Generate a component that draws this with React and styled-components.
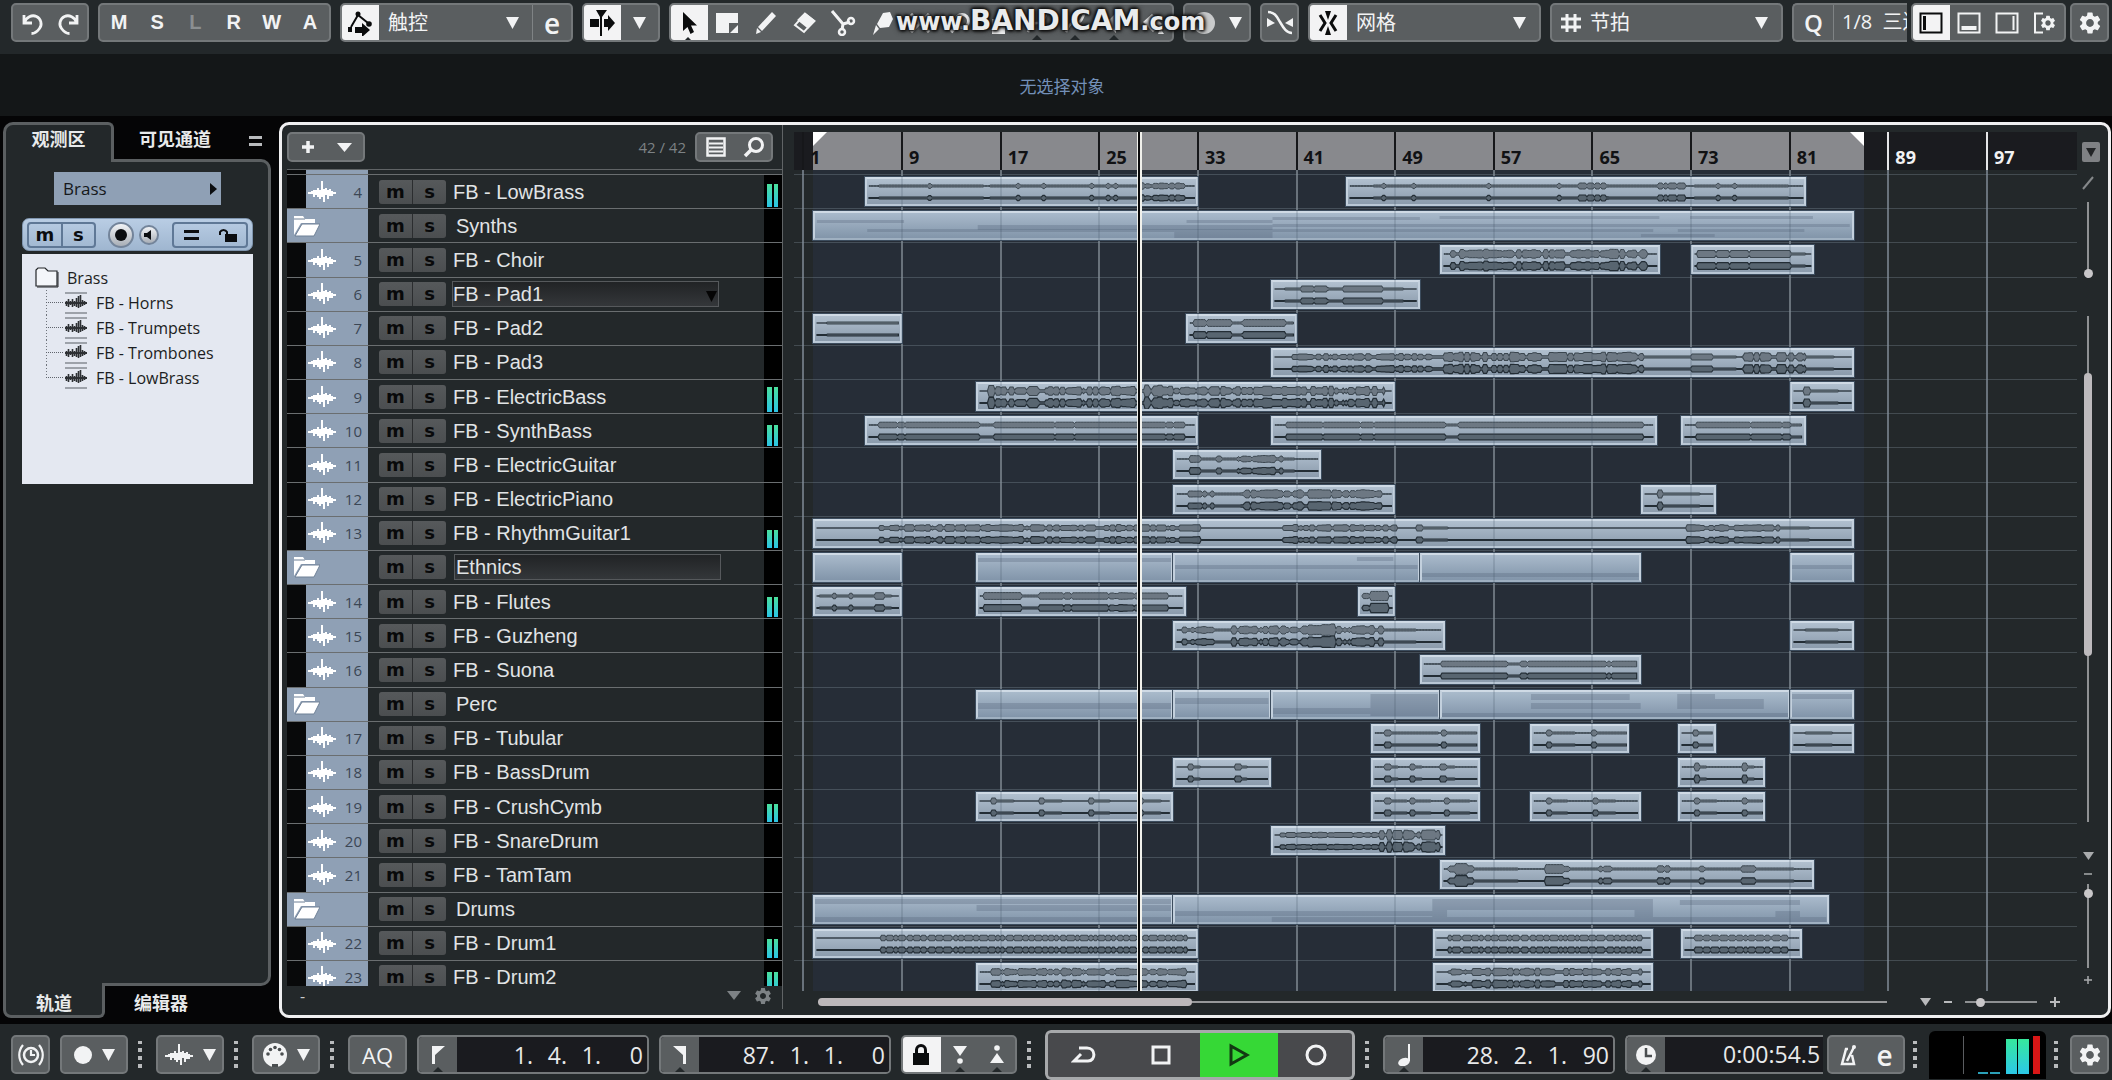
import React from 'react';
import styled, { createGlobalStyle, css } from 'styled-components';
import { MdSettings } from 'react-icons/md';

/* ---------- theme values ---------- */

const ui = '"Open Sans", "Noto Sans CJK SC", sans-serif';
const arial = '"Liberation Sans", "Noto Sans CJK SC", sans-serif';
const chrome = '#23282a';
const ink = '#f2f3f4';
const steel = '#8fa0b5';

const Global = createGlobalStyle`
  *, *::before, *::after { box-sizing: border-box; }
  body { margin: 0; background: #050506; font-family: ${ui}; color: ${ink}; }
  button, input, select { font: inherit; color: inherit; margin: 0; padding: 0; border: 0; background: none; }
  ul { list-style: none; margin: 0; padding: 0; }
  svg { display: block; flex: none; }
`;

const Page = styled.div`
  height: 100vh;
  display: flex;
  flex-direction: column;
  overflow: hidden;
  background: #050506;
`;

/* ---------- toolbar parts ---------- */

const TopBar = styled.header`
  display: flex;
  gap: 9px;
  height: 54px;
  padding: 3px 3px 12px 11px;
  background: ${chrome};
`;

const TopEnd = styled.div`
  flex: 1 1 0;
  min-width: 0;
  display: flex;
  gap: 4px;
`;

const Group = styled.div`
  display: flex;
  flex: ${(p) => (p.$grow ? '1 1 0' : 'none')};
  width: ${(p) => (p.$w ? `${p.$w}px` : 'auto')};
  min-width: 0;
  height: 39px;
  border: 2px solid #74787a;
  border-radius: 5px;
  background: ${(p) => (p.$dark ? '#1a1b1f' : '#5a5e60')};
  overflow: hidden;
  ${(p) => p.$grow && css`
    border-right: 0;
    border-radius: 5px 0 0 5px;
  `}
`;

const Cell = styled.button`
  position: relative;
  flex: ${(p) => (p.$w ? 'none' : '1 1 0')};
  width: ${(p) => (p.$w ? `${p.$w}px` : 'auto')};
  min-width: 0;
  margin: ${(p) => (p.$on ? '-2px 0 -2px -2px' : '0')};
  display: flex;
  align-items: center;
  justify-content: center;
  gap: 10px;
  font: 700 20px ${arial};
  color: ${(p) => (p.$on ? '#0b0c0d' : p.$dim ? '#8b8f91' : ink)};
  background: ${(p) => (p.$on ? '#f3f3f4' : p.$solid ? '#5a5e60' : 'transparent')};
  border-left: ${(p) => (p.$rule ? '1px solid #7f8385' : '0')};
  ${(p) => p.$notch && css`
    &::after {
      content: '';
      position: absolute;
      left: calc(50% - 6px);
      bottom: -1px;
      border: 6px solid transparent;
      border-top: 0;
      border-bottom-color: ${chrome};
    }
  `}
`;

const Thin = styled.span`
  font: ${(p) => p.$b || 400} ${(p) => p.$s || 24}px/32px ${ui};
  color: ${ink};
`;

const Picker = styled.div`
  flex: 1;
  min-width: 0;
  display: grid;
  align-items: center;
  & > * { grid-area: 1 / 1; }
  & > svg { justify-self: end; margin-right: 13px; pointer-events: none; }
`;

const PickerSelect = styled.select`
  appearance: none;
  width: 100%;
  height: 35px;
  padding: 0 9px;
  outline: 0;
  font-size: 20px;
  line-height: 34px;
`;

const HashSlot = styled.span`
  display: flex;
  align-items: center;
  padding-left: 9px;
`;

const QText = styled.span`
  padding-left: 8px;
  font-size: 20px;
  line-height: 34px;
  white-space: nowrap;
  border-left: 1px solid #7f8385;
`;

const Watermark = styled.div`
  position: absolute;
  left: 896px;
  top: 4px;
  display: flex;
  align-items: baseline;
  font: 700 24px/34px "DejaVu Sans", sans-serif;
  color: #e9ebec;
  text-shadow: 0 0 3px #111, 0 0 4px #111, 1px 1px 3px #111, -1px -1px 3px #111, 0 0 6px #222;
  pointer-events: none;
`;

const Big = styled.span`
  font-size: 28px;
`;

const InfoLine = styled.div`
  height: 62px;
  padding-left: 12px;
  display: flex;
  align-items: center;
  justify-content: center;
  background: #141718;
  color: #7390b8;
  font-size: 17px;
`;

/* ---------- main area ---------- */

const Main = styled.main`
  flex: 1;
  min-height: 0;
  display: flex;
  gap: 8px;
  padding: 6px 1px 6px 3px;
`;

const Inspector = styled.aside`
  width: 268px;
  flex: none;
  display: flex;
  flex-direction: column;
`;

const Tabs = styled.div`
  display: flex;
  height: ${(p) => (p.$low ? 32 : 37)}px;
`;

const Tab = styled.button`
  position: relative;
  width: ${(p) => p.$w}px;
  height: 100%;
  padding-bottom: ${(p) => (p.$low ? 0 : 4)}px;
  padding-top: ${(p) => (p.$low ? 2 : 0)}px;
  font-size: 18px;
  font-weight: 700;
  line-height: 24px;
  color: #e8eaeb;
  ${(p) => p.$on && css`
    z-index: 1;
    height: calc(100% + 3px);
    background: ${chrome};
    border: 3px solid #5b5f61;
    ${p.$low
      ? 'border-top: 0; border-radius: 0 0 6px 8px; margin-top: -3px; padding-top: 8px;'
      : 'border-bottom: 0; border-radius: 10px 6px 0 0; padding-bottom: 10px;'}
  `}
`;

const TabMenu = styled.button`
  margin-left: auto;
  margin-right: 9px;
  height: 37px;
`;

const InspectorBody = styled.div`
  flex: 1;
  min-height: 0;
  display: flex;
  flex-direction: column;
  padding: 10px 15px 0 16px;
  background: ${chrome};
  border: 3px solid #5b5f61;
  border-radius: 0 10px 10px 0;
`;

const TrackPick = styled.button`
  display: flex;
  align-items: center;
  justify-content: space-between;
  width: 167px;
  height: 33px;
  margin-left: 32px;
  padding: 0 4px 0 9px;
  background: ${steel};
  color: #15181b;
  font-size: 17px;
`;

const Strip = styled.div`
  display: flex;
  align-items: center;
  height: 33px;
  margin-top: 13px;
  padding: 0 4px;
  border-radius: 7px;
  border: 1px solid #7f95ae;
  background: linear-gradient(#b9cde4, #9fb6d0);
`;

const StripPair = styled.div`
  display: flex;
  height: 26px;
  width: ${(p) => p.$w}px;
  margin-left: ${(p) => p.$ml || 0}px;
  border: 2px solid #5f7896;
  border-radius: 4px;
`;

const StripKey = styled.button`
  flex: 1;
  display: flex;
  align-items: center;
  justify-content: center;
  color: #0b0d10;
  font: 700 18px/19px "DejaVu Sans", sans-serif;
  border-left: ${(p) => (p.$rule ? '2px solid #5f7896' : '0')};
`;

const Round = styled.button`
  width: ${(p) => p.$d}px;
  height: ${(p) => p.$d}px;
  margin-left: ${(p) => p.$ml}px;
  display: flex;
  align-items: center;
  justify-content: center;
  border-radius: 50%;
  border: 2px solid #73849a;
  background: linear-gradient(#f1f3f6, #a8aeb6);
`;

const Tree = styled.div`
  height: 230px;
  margin-top: 3px;
  padding: 11px 13px;
  background: #e4e8f1;
  color: #1c1e22;
  font-size: 16px;
`;

const TreeHead = styled.div`
  display: flex;
  align-items: center;
  gap: 8px;
  height: 25px;
`;

const TreeList = styled.ul`
  margin-left: 11px;
`;

const TreeItem = styled.li`
  display: flex;
  align-items: center;
  height: 25px;
  gap: 9px;
  &::before {
    content: '';
    align-self: flex-start;
    width: 17px;
    height: 13px;
    margin-right: -7px;
    border-bottom: 1px dotted #5f646c;
  }
  background: repeating-linear-gradient(#6f747c 0 1px, transparent 1px 3px) left top / 1px ${(p) => (p.$last ? '12px' : '100%')} no-repeat;
`;

const Frame = styled.section`
  flex: 1;
  min-width: 0;
  display: grid;
  grid-template-columns: 501px minmax(0, 1fr) 31px;
  grid-template-rows: 45px minmax(0, 1fr) 29px;
  background: ${chrome};
  border: 3px solid #f0f0f1;
  border-radius: 10px;
`;

const ListHead = styled.div`
  display: flex;
  align-items: center;
  margin-left: 5px;
  padding-right: 9px;
  border-right: 1px solid #606466;
  border-bottom: 1px solid #606466;
`;

const HeadGroup = styled(Group)`
  height: 30px;
`;

const Count = styled.span`
  margin-left: auto;
  margin-right: 9px;
  color: #7d8285;
  font-size: 15px;
`;

const rowsTemplate = '4px repeat(23, minmax(0, 34fr)) minmax(0, 26fr)';

const TrackList = styled.ul`
  display: grid;
  grid-template-rows: ${rowsTemplate};
  margin-left: 5px;
  border-right: 1px solid #606466;
`;

const TrackRow = styled.li`
  overflow: hidden;
  border-top: 1px solid #6a6e70;
`;

const TrackLine = styled.div`
  display: flex;
  align-items: center;
  height: 34px;
  padding-bottom: 1px;
`;

const StubRow = styled.li`
  display: flex;
`;

const Indent = styled.span`
  width: 19px;
  height: 34px;
  background: #08090a;
`;

const Tag = styled.span`
  display: flex;
  align-items: center;
  justify-content: space-between;
  width: ${(p) => (p.$folder ? 81 : 62)}px;
  height: 34px;
  padding: ${(p) => (p.$folder ? '0 6px' : '0 6px 0 2px')};
  background: ${steel};
  color: #3b4654;
  font-size: 15px;
`;

const KeyPair = styled.span`
  display: flex;
  gap: 1px;
  margin-left: 11px;
  width: 67px;
  height: 24px;
  border-radius: 3px;
  overflow: hidden;
  background: #2b2d2f;
`;

const Key = styled.button`
  flex: 1;
  background: linear-gradient(#56595b, #4b4e50);
  color: #08090a;
  font: 700 18px/20px "DejaVu Sans", sans-serif;
  height: 24px;
`;

const nameFont = css`
  font: 400 20px/24px ${arial};
  color: #e1e4e6;
`;

const Name = styled.span`
  flex: 1;
  padding-left: ${(p) => (p.$folder ? 10 : 7)}px;
  ${nameFont}
`;

const nameBox = css`
  ${nameFont}
  width: 267px;
  height: 26px;
  border: 1px solid #56595c;
  background: linear-gradient(#212325, #34373a);
  outline: 0;
`;

const NameInput = styled.input`
  && {
    ${nameBox}
    margin-left: 8px;
    margin-right: auto;
    padding-left: 1px;
  }
`;

const NamePick = styled.div`
  display: grid;
  align-items: center;
  margin: 0 auto 0 6px;
  & > * { grid-area: 1 / 1; }
  & > svg { justify-self: end; margin: 4px 2px 0 0; pointer-events: none; }
`;

const NameSelect = styled.select`
  && {
    ${nameBox}
    appearance: none;
  }
`;

const MeterSlot = styled.span`
  display: flex;
  align-items: flex-end;
  gap: 2px;
  width: 18px;
  height: 34px;
  margin-left: auto;
  padding: 0 4px 2px 3px;
  background: #000;
`;

const MeterBar = styled.span`
  width: 5px;
  height: ${(p) => p.$h}px;
  background: linear-gradient(#4adf9c, #2bc4e6);
`;

const ListFoot = styled.div`
  display: flex;
  align-items: center;
  gap: 12px;
  margin: 0 0 6px 5px;
  padding: 0 9px 4px 13px;
  border-right: 1px solid #606466;
  color: #7d8285;
`;

const Dash = styled.span`
  margin-right: auto;
  color: #c8cacb;
  font-size: 16px;
`;

/* ---------- timeline ---------- */

const BARS = 104.06;
const at = (bar) => ((bar - 0.24) / BARS) * 100;
const barPx = 12.33;

const Ruler = styled.div`
  position: relative;
  margin: 7px 0 0 11px;
  background: #1a1b1f;
  overflow: hidden;
`;

const Cycle = styled.div`
  position: absolute;
  top: 0;
  bottom: 0;
  left: ${at(1.75)}%;
  right: ${100 - at(87)}%;
  display: flex;
  justify-content: space-between;
  background: #88898d;
`;

const CycleBand = styled.div`
  position: absolute;
  top: 0;
  bottom: 0;
  left: ${at(1.75)}%;
  right: ${100 - at(87)}%;
  background: #262d37;
`;

const Tick = styled.span`
  position: absolute;
  top: 0;
  bottom: 0;
  left: calc(${(p) => at(p.$bar)}% - 1px);
  padding: 14px 0 0 6px;
  border-left: 2px solid ${(p) => (p.$out ? '#e6e6e8' : '#16171a')};
  color: ${(p) => (p.$out ? '#f2f2f3' : '#111214')};
  font-size: 18px;
  font-weight: 700;
  line-height: 22px;
`;

const Lanes = styled.div`
  position: relative;
  margin-left: 11px;
  margin-bottom: -5px;
  padding-bottom: 5px;
  overflow: hidden;
`;

const LaneGrid = styled.ul`
  position: relative;
  height: 100%;
  display: grid;
  grid-template-rows: ${rowsTemplate};
`;

const Lane = styled.li`
  position: relative;
  border-top: 1px solid rgba(150, 170, 180, 0.28);
`;

const GridLine = styled.span`
  position: absolute;
  top: 0;
  bottom: 0;
  left: calc(${(p) => at(p.$bar)}% - 1px);
  width: 2px;
  background: ${(p) => (p.$over ? 'rgba(60, 78, 96, 0.18)' : '#737a82')};
`;

const ClipBox = styled.div`
  position: absolute;
  top: 2px;
  left: ${(p) => at(p.$a)}%;
  width: ${(p) => ((p.$b - p.$a) / BARS) * 100}%;
  height: 29px;
  overflow: hidden;
  border: 2px solid #c3d0dd;
  border-top-color: #cfdae5;
  border-bottom-color: ${(p) => (p.$folder ? '#9fb0c1' : '#b9c7d5')};
  outline: 1px solid #3c4c5d;
  background: ${(p) => (p.$folder ? 'linear-gradient(#a9bacb, #8295aa)' : 'linear-gradient(#b1c0cf, #8b9bac)')};
  & > svg { width: 100%; height: 25px; }
`;

const Playhead = styled.div`
  position: absolute;
  z-index: 3;
  top: 0;
  bottom: 0;
  left: ${at(28.05)}%;
  width: 5px;
  background: #0a0a0b;
  border: 0 solid #f1f1ec;
  border-width: 0 2px 0 1px;
`;

const Side = styled.div`
  display: flex;
  flex-direction: column;
  align-items: center;
  padding-right: 9px;
  color: #a9abad;
`;

const SideButton = styled.button`
  width: 18px;
  height: 20px;
  margin: 17px 0 0 6px;
  display: flex;
  align-items: center;
  justify-content: center;
  border-radius: 2px;
  background: #7f8184;
`;

const rangeBase = css`
  appearance: none;
  -webkit-appearance: none;
  outline: 0;
  &::-webkit-slider-thumb {
    -webkit-appearance: none;
    width: 9px;
    height: 9px;
    border-radius: 50%;
    background: #c9c7c9;
  }
`;

const VRange = styled.input`
  && {
    ${rangeBase}
    writing-mode: vertical-lr;
    direction: ${(p) => (p.$up ? 'rtl' : 'ltr')};
    width: 10px;
    height: ${(p) => p.$h}px;
    margin-top: ${(p) => (p.$up ? 12 : 0)}px;
    background: linear-gradient(#8f9193, #8f9193) center / 2px 100% no-repeat;
  }
`;

const HRange = styled.input`
  && {
    ${rangeBase}
    width: 72px;
    height: 10px;
    background: linear-gradient(#8f9193, #8f9193) center / 100% 2px no-repeat;
  }
`;

const PencilMark = styled.svg`
  margin-top: 6px;
`;

const VScroll = styled.div`
  flex: 1;
  width: 8px;
  margin: 38px 0 30px;
  padding-top: 57px;
  background: linear-gradient(#8f9193, #8f9193) center / 2px 100% no-repeat;
`;

const VThumb = styled.div`
  height: 63%;
  border-radius: 4px;
  background: #bdbabd;
`;

const TimeFoot = styled.div`
  grid-column: 2 / 4;
  display: flex;
  align-items: center;
  padding: 3px 48px 0 35px;
  gap: 13px;
  color: #b9babc;
`;

const HScroll = styled.div`
  flex: 1;
  margin-right: 20px;
  background: linear-gradient(#98999b, #98999b) center / 100% 2px no-repeat;
`;

const HThumb = styled.div`
  width: 35%;
  height: 8px;
  border-radius: 4px;
  background: #bdb8ba;
`;

/* ---------- transport ---------- */

const BottomBar = styled.footer`
  display: flex;
  align-items: center;
  gap: 10px;
  height: 56px;
  padding: 5px 3px 0 11px;
  background: ${chrome};
`;

const EndGroup = styled.div`
  flex: 1 1 0;
  min-width: 0;
  display: flex;
  align-items: center;
  gap: 8px;
`;

const TimeClip = styled.div`
  flex: 1;
  min-width: 0;
  display: flex;
  margin-right: -4px;
`;

const Dots = styled.span`
  width: 8px;
  height: 27px;
  flex: none;
  background: repeating-linear-gradient(#b9bbbd 0 4px, transparent 4px 8px) left / 4px 28px no-repeat;
`;

const Digits = styled.span`
  flex: 1;
  display: grid;
  grid-template-columns: 1fr 34px 34px 42px;
  align-items: center;
  justify-items: end;
  padding-right: 4px;
  font-size: 23px;
  line-height: 34px;
  color: #e8e9ea;
  background: #1a1b1f;
`;

const Clock = styled.span`
  flex: 1;
  padding-left: 58px;
  overflow: hidden;
  white-space: nowrap;
  font-size: 23px;
  line-height: 34px;
  color: #e8e9ea;
  background: #1a1b1f;
`;

const Transport = styled.div`
  position: relative;
  display: flex;
  flex: none;
  width: 310px;
  height: 50px;
  border-radius: 6px;
  background: #48494c;
  overflow: hidden;
  &::after {
    content: '';
    position: absolute;
    inset: 0;
    border: 3px solid #a7a9ab;
    border-radius: 6px;
    pointer-events: none;
  }
`;

const TransportKey = styled.button`
  flex: 1;
  display: flex;
  align-items: center;
  justify-content: center;
  background: ${(p) => (p.$play ? '#36d836' : 'transparent')};
`;

const Output = styled.div`
  display: flex;
  align-items: flex-end;
  flex: none;
  width: 117px;
  height: 48px;
  padding: 5px 4px 5px 34px;
  border-radius: 6px 6px 0 0;
  background: #000;
`;

const OutBar = styled.span`
  width: ${(p) => p.$w}px;
  height: ${(p) => p.$h}px;
  margin-left: ${(p) => p.$ml}px;
  background: ${(p) => p.$c};
`;

const cyanBar = 'linear-gradient(#36e89c, #2cc8e8)';

/* ---------- icons ---------- */

const Icon = ({ w = 26, h = 26, children, ...rest }) => (
  <svg width={w} height={h} viewBox={`0 0 ${w} ${h}`} fill="none" stroke="currentColor" strokeWidth="2.5" aria-hidden="true" {...rest}>
    {children}
  </svg>
);
const Solid = (p) => <Icon {...p} fill="currentColor" stroke="none" />;

const Down = ({ w = 13, h = 12, color = ink }) => (
  <svg width={w} height={h} viewBox="0 0 12 12" preserveAspectRatio="none" aria-hidden="true">
    <path d="M0 0h12L6 12z" fill={color} />
  </svg>
);

const Undo = () => <Icon w={24} h={24}><path d="M4 4v8h8M4.500 11.500C6 6 12 3.500 16.500 5.500s6 8 3 12-5 5-8 5" strokeWidth="2.800" /></Icon>;
const Redo = () => <Icon w={24} h={24}><path d="M20 4v8h-8M19.500 11.500C18 6 12 3.500 7.500 5.500s-6 8-3 12 5 5 8 5" strokeWidth="2.800" /></Icon>;
const Automation = () => (
  <Icon><path d="M4 17 11 5l10 8" strokeWidth="2" /><g fill="currentColor" stroke="none"><circle cx="11" cy="4" r="2.500" /><circle cx="22" cy="14" r="2.800" /><rect x="1" y="17" width="4" height="5" /><path d="M8 17h7v-4l8 7-8 7v-4H8z" /></g></Icon>
);
const Scroll = () => <Solid><path d="M1 9h9v8H1zM15 9h4V5l7 8-7 8v-4h-4zM7 0h11l-5 7v19h-2V7z" /></Solid>;
const Arrow = () => <Solid><path d="M8 2v19l4.500-4 3 7 3.500-2-3-6.500h6z" /></Solid>;
const Range = () => <Solid><path d="M2 3h22v10h-9v10H2zM24 15v8h-8z" /></Solid>;
const Pencil = () => <Solid><path d="M19 2l4 4L9 21l-4-4zM4 18l4 4-5 2z" /></Solid>;
const Eraser = () => <Icon><path d="M14 4 23 11 13 22 4 15z" strokeWidth="2" /><path d="M14 4 23 11 17 17 8 10z" fill="currentColor" /></Icon>;
const Scissors = () => <Icon><path d="M2 1 13 14l7-2M13 14l-1 6" strokeWidth="3" /><circle cx="21" cy="11" r="3" /><circle cx="12" cy="22" r="3" /></Icon>;
const Glue = () => <Solid><path d="M14 3l7-1 3 7-4 8-9 1-3-4zM7 15l3 4-6 6z" /></Solid>;
const Cross = () => <Icon><path d="M4 4l18 18M22 4 4 22" strokeWidth="3" /></Icon>;
const Lens = () => <Icon><circle cx="16" cy="11" r="6.500" strokeWidth="3" /><path d="M11 16 5 22" strokeWidth="3.500" /></Icon>;
const Hand = () => <Solid><path d="M7 24V9h3v6h2V3h3v12h2V6h3v18z" /></Solid>;
const LineIcon = () => <Icon><path d="M4 22C10 4 16 22 22 4" /></Icon>;
const Speaker = () => <Solid><path d="M4 9h5l6-6v20l-6-6H4z" /></Solid>;
const Bucket = () => <Solid><path d="M3 12 12 4l10 10-9 8zM20 18l4 6h-6z" /></Solid>;
const Ball = () => <Solid><circle cx="11" cy="13" r="11" fill="#c9cbcc" /></Solid>;
const XFade = () => <Icon><path d="M1 2c7 0 9 5 12 10s6 11 12 11" /><path d="M0 8l8 5-8 4zM26 8l-8 5 8 4z" fill="currentColor" stroke="none" /></Icon>;
const Snap = () => <Icon><path d="M5 5l5 8-5 8M21 5l-5 8 5 8" strokeWidth="3" /><path d="M10 1h6l-3 9zM10 25h6l-3-9z" fill="currentColor" stroke="none" /></Icon>;
const Hash = () => <Icon w={20} h={22}><path d="M6 2v18M14 2v18M0 7h20M0 15h20" strokeWidth="3" /></Icon>;
const Zone = ({ side }) => (
  <Icon w={24} h={22}>
    <rect x="1.500" y="1.500" width="21" height="19" strokeWidth="2" />
    {side === 'left' && <path d="M5.500 4v14" strokeWidth="3" />}
    {side === 'low' && <path d="M4.500 16h15" strokeWidth="4" />}
    {side === 'right' && <path d="M18.500 4v14" strokeWidth="2" />}
  </Icon>
);
const ZoneSetup = () => <Icon w={24} h={22}><path d="M10 1.500H2v19h8" strokeWidth="2" /><g transform="translate(6 2)"><MdSettings size={18} stroke="none" fill="currentColor" /></g></Icon>;
const Equals = ({ color = '#b9bbbd', w = 13 }) => <svg width={w} height="12" viewBox="0 0 13 12" preserveAspectRatio="none"><path d="M0 1h13v3H0zM0 8h13v3H0z" fill={color} /></svg>;
const Unlock = () => <svg width="20" height="16" viewBox="0 0 20 16"><path d="M2 8V5a4 4 0 0 1 7 0v3" fill="none" stroke="#0b0d10" strokeWidth="2" /><path d="M7 7h12v8H7z" fill="#0b0d10" /></svg>;
const Plus = () => <Icon w={14} h={14}><path d="M7 1v12M1 7h12" strokeWidth="3.500" /></Icon>;
const ListIcon = () => <Icon w={20} h={20}><rect x="1.500" y="1.500" width="17" height="17" /><path d="M3 6.500h14M3 10.500h14M3 14.500h14" strokeWidth="2" /></Icon>;
const FolderOpen = () => (
  <svg width="27" height="22" viewBox="0 0 27 22" aria-hidden="true">
    <path d="M1 1h9l2 3h10v4H8L1 20z" fill="#fff" />
    <path d="M9 9h18l-6 12H2z" fill="#fff" stroke="#6f8096" strokeWidth="1" />
    <path d="M1 4h11" stroke="#6f8096" />
  </svg>
);
const waveBars = [[2, 1, 1], [4, 2, 1], [6, 3, 4], [8, 3, 2], [10, 5, 4], [12, 3, 6], [14, 12, 4], [16, 4, 9], [18, 5, 2], [20, 3, 6], [22, 4, 3], [24, 2, 3], [26, 1, 1]];
const Wave = ({ color = '#fff' }) => (
  <svg width="28" height="24" viewBox="0 0 28 24" aria-hidden="true">
    <path d={`M0 13h28${waveBars.map(([x, u, d]) => `M${x} ${13 - u}V${13 + d}`).join('')}`} stroke={color} strokeWidth="2" fill="none" />
  </svg>
);
const AudioGlyph = () => (
  <svg width="22" height="22" viewBox="0 0 22 22" aria-hidden="true">
    <path d="M0 1h22M0 21h22" stroke="#858a92" strokeWidth="1.500" />
    <path d="M0 11h22" stroke="#2d3034" strokeWidth="2" />
    <path d="M1.500 9v5M3.500 7v8M5.500 9v4M7.500 7v8M9.500 9v5M11.500 6v9M13.500 4v12M15.500 3v12M17.500 8v6M19.500 9v4" stroke="#2d3034" strokeWidth="1.600" />
  </svg>
);
const TreeFolder = () => <svg width="24" height="21" viewBox="0 0 24 21"><path d="M1 19V3l2-2h7l3 3h9v15z" fill="#f4f6fa" stroke="#222529" strokeWidth="1.200" /><path d="M2 20h21V5" fill="none" stroke="#222529" /></svg>;
const Sync = () => <Icon w={28} h={26}><circle cx="14" cy="13" r="7" /><path d="M14 8v5h4M6 3c-5 6-5 14 0 20M22 3c5 6 5 14 0 20" strokeWidth="2.200" /></Icon>;
const Midi = () => <Solid w={24} h={24}><circle cx="12" cy="12" r="12" /><g fill="#4a4e50"><circle cx="5" cy="11" r="1.800" /><circle cx="7.500" cy="6.500" r="1.800" /><circle cx="12" cy="4.500" r="1.800" /><circle cx="16.500" cy="6.500" r="1.800" /><circle cx="19" cy="11" r="1.800" /><path d="M9 24v-3h6v3z" /></g></Solid>;
const LeftFlag = () => <Solid w={14} h={18}><path d="M1 0h13L4 9v9H1z" /></Solid>;
const RightFlag = () => <Solid w={14} h={18}><path d="M13 0H0l10 9v9h3z" /></Solid>;
const Lock = () => <Icon w={18} h={22}><path d="M4.500 10V6a4.500 4.500 0 0 1 9 0v4" strokeWidth="3" /><rect x="1" y="9" width="16" height="12" fill="currentColor" stroke="none" /></Icon>;
const PunchIn = () => <Solid w={16} h={20}><path d="M1 1h14L8 11z" /><circle cx="8" cy="16" r="2.800" /></Solid>;
const PunchOut = () => <Solid w={16} h={20}><path d="M1 18h14L8 8z" /><circle cx="8" cy="3" r="2.800" /></Solid>;
const Cycling = () => <Icon><path d="M8 6h8c9 0 9 13 1 13H3l7-7" strokeWidth="3" /></Icon>;
const Note = () => <Solid w={16} h={22}><path d="M12 0h2v17h-2z" /><ellipse cx="8" cy="18" rx="6" ry="4" transform="rotate(-20 8 18)" /></Solid>;
const ClockIcon = () => <Icon w={22} h={22}><circle cx="11" cy="11" r="10" fill="currentColor" stroke="none" /><path d="M11 4v8h6" stroke="#4a4e50" /></Icon>;
const Metronome = () => <Icon w={18} h={22}><path d="M9 5 7 5 3 20h12l-2-9M8 17l7-14" /><circle cx="15" cy="3" r="2" fill="currentColor" stroke="none" /></Icon>;

/* ---------- wave forms ---------- */

function makeRandom(seed) {
  let s = (seed * 2654435761) >>> 0;
  return () => {
    s = (s + 0x6d2b79f5) >>> 0;
    let t = Math.imul(s ^ (s >>> 15), 1 | s);
    t = (t + Math.imul(t ^ (t >>> 7), 61 | t)) ^ t;
    return ((t ^ (t >>> 14)) >>> 0) / 4294967296;
  };
}

/* Segment kinds: f flat, s sustained with notches, n noise, p sparse pulses, o row of blobs, h single hit. */
function envelope(width, segs, seed) {
  const rnd = makeRandom(seed);
  const pts = [];
  let hold = 0;
  let value = 0.5;
  for (let x = 0; x <= width; x += 1.5) {
    const f = x / width;
    const seg = segs.find((g) => f >= g[0] && f <= g[1]);
    if (!seg) {
      value = 0.3;
      hold = 0;
    } else {
      const [a, , amp, kind] = seg;
      const r = rnd();
      if (kind === 'f') value = 1;
      else if (kind === 'h') value = x - a * width < 5 ? amp : 1;
      else if (hold > 0) hold -= 1;
      else if (kind === 's') { value = r < 0.1 ? 1.5 : amp; hold = r < 0.1 ? 0 : 3; }
      else if (kind === 'p') { value = r < 0.1 ? amp : 1; hold = r < 0.1 ? 1 : 2; }
      else if (kind === 'n') { value = r < 0.35 ? 1.2 : 1.4 + r * (amp - 1.6); hold = r > 0.5 ? 2 : 0; }
      else if (kind === 'o') { value = value > 2 ? 1.1 : amp; hold = value > 2 ? 1 + Math.floor(r * 4) : (r > 0.8 ? 1 : 0); }
    }
    pts.push([x, value]);
  }
  return pts;
}

function outline(pts, mid) {
  const top = pts.map(([x, v]) => `${x.toFixed(1)} ${(mid - v).toFixed(1)}`);
  const low = pts.slice().reverse().map(([x, v]) => `${x.toFixed(1)} ${(mid + v).toFixed(1)}`);
  return `M${top.join('L')}L${low.join('L')}Z`;
}

function WaveClip({ a, b, segs, seed }) {
  const w = Math.round((b - a) * barPx);
  const one = envelope(w - 7, segs, seed);
  return (
    <ClipBox $a={a} $b={b}>
      <svg viewBox={`-2 0 ${w - 4} 25`} preserveAspectRatio="none" aria-hidden="true">
        <path d={outline(one, 7)} fill="#6d7883" stroke="#3b464f" strokeWidth="1" />
        <path d={outline(one, 19)} fill="#586570" stroke="#232d35" strokeWidth="1.200" />
      </svg>
    </ClipBox>
  );
}

function FolderClip({ a, b, parts }) {
  const w = (b - a) * barPx;
  return (
    <ClipBox $a={a} $b={b} $folder>
      <svg viewBox={`0 0 ${w} 25`} preserveAspectRatio="none" aria-hidden="true">
        {parts.map(([x1, x2, y, h], i) => (
          <rect key={i} x={(x1 - a) * barPx} y={y - 2} width={(x2 - x1) * barPx} height={h} fill="rgba(86,104,124,0.32)" />
        ))}
      </svg>
    </ClipBox>
  );
}

/* ---------- project data ---------- */

const END = 86.2;
const hits = (list, amp = 3) => list.map(([a, b]) => [a, b, amp, 'h']);
const drum = [[0.05, 0.96, 2.8, 'o']];

const tracks = [
  { n: 4, name: 'FB - LowBrass', meter: 23, clips: [
    [6, 33, [[0.03, 0.35, 2.4, 'p'], [0.37, 0.82, 2.6, 'p'], [0.82, 0.97, 3.4, 'n']]],
    [45, 82.3, [[0.05, 0.5, 2.6, 'p'], [0.5, 0.57, 3, 'o'], [0.57, 0.68, 1, 'f'], [0.68, 0.74, 3, 'o'], [0.76, 0.97, 2.6, 'p']]] ] },
  { name: 'Synths', folder: [[1.75, END, [[1.9, 9, 9, 3], [6, 15, 18, 3], [15, 39, 14, 5], [15, 31, 18, 3], [31, 39, 18, 9], [32, 39, 9, 3], [39, 51, 6, 3], [52.6, 70.5, 5, 3], [73, 83, 5, 3], [39, 86, 13, 3], [39, 70, 18, 3], [72, 82.3, 18, 3], [69, 75, 23, 3]]]] },
  { n: 5, name: 'FB - Choir', clips: [
    [52.6, 70.5, [[0.03, 0.95, 5, 'n']]],
    [73, 83, [[0.02, 0.82, 3.4, 's'], [0.82, 0.95, 1, 'f']]] ] },
  { n: 6, name: 'FB - Pad1', pick: true, clips: [
    [38.9, 51, [[0.07, 0.19, 1, 'f'], [0.19, 0.38, 3, 's'], [0.38, 0.48, 1, 'f'], [0.48, 0.75, 3, 's'], [0.75, 0.9, 1, 'f']]] ] },
  { n: 7, name: 'FB - Pad2', clips: [
    [1.75, 9, [[0.12, 1, 1, 'f']]],
    [32, 41, [[0.03, 0.4, 3.4, 's'], [0.4, 0.5, 1, 'f'], [0.5, 0.92, 3.4, 's'], [0.92, 1, 1, 'f']]] ] },
  { n: 8, name: 'FB - Pad3', clips: [
    [38.9, END, [[0.03, 0.28, 3.6, 'n'], [0.28, 0.64, 5, 'n'], [0.64, 0.72, 1, 'f'], [0.72, 0.76, 3, 's'], [0.76, 0.8, 1, 'f'], [0.81, 0.87, 5.6, 'n'], [0.87, 0.92, 4.6, 'n'], [0.92, 0.97, 1, 'f']]] ] },
  { n: 9, name: 'FB - ElectricBass', meter: 25, clips: [
    [15, 49, [[0.02, 0.04, 5.5, 's'], [0.04, 0.4, 5, 'n'], [0.4, 0.46, 6.4, 'n'], [0.46, 0.52, 4, 'n'], [0.52, 0.98, 5, 'n']]],
    [81, END, [[0.18, 0.78, 4, 'h']]] ] },
  { n: 10, name: 'FB - SynthBass', meter: 21, clips: [
    [6, 33, [[0.03, 0.34, 2.8, 's'], [0.34, 0.37, 1, 'f'], [0.37, 0.97, 2.8, 's']]],
    [38.9, 70.2, [[0.03, 0.45, 2.8, 's'], [0.45, 0.48, 1, 'f'], [0.48, 0.97, 2.8, 's']]],
    [72.2, 82.3, [[0.09, 0.9, 2.8, 's'], [0.9, 1, 1, 'f']]] ] },
  { n: 11, name: 'FB - ElectricGuitar', clips: [
    [31, 43, [[0.09, 0.16, 4, 'n'], [0.16, 0.26, 1, 'f'], [0.26, 0.31, 3, 's'], [0.31, 0.42, 1, 'f'], [0.42, 0.75, 4, 'n'], [0.75, 0.84, 1, 'f']]] ] },
  { n: 12, name: 'FB - ElectricPiano', clips: [
    [31, 49, [[0.05, 0.12, 4, 'n'], [0.12, 0.28, 3, 'p'], [0.28, 0.95, 4.6, 'n']]],
    [68.9, 75, [[0.18, 0.8, 4, 'h']]] ] },
  { n: 13, name: 'FB - RhythmGuitar1', meter: 18, clips: [
    [1.75, END, [[0.06, 0.37, 3.6, 'n'], [0.45, 0.56, 3.6, 'n'], [0.58, 0.61, 3, 'h'], [0.84, 0.93, 3.6, 'n'], [0.93, 0.96, 1, 'f']]] ] },
  { name: 'Ethnics', input: true, folder: [
    [1.75, 9, []], [15, 31, [[15, 31, 5, 4]]], [31, 51, [[31, 51, 12, 4], [46, 49, 4, 4]]], [51, 68.9, [[51, 68.9, 20, 4]]], [81, END, [[81, END, 12, 4]]]] },
  { n: 14, name: 'FB - Flutes', meter: 20, clips: [
    [1.75, 9, [[0.03, 0.68, 2.8, 'p'], [0.68, 0.82, 3.2, 's'], [0.82, 0.9, 1, 'f']]],
    [15, 32, [[0.02, 0.2, 3.4, 's'], [0.2, 0.27, 1, 'f'], [0.27, 0.62, 3.2, 's'], [0.62, 0.72, 3.6, 'n'], [0.72, 0.93, 3, 's']]],
    [46, 49, [[0.05, 0.14, 2.6, 's'], [0.14, 0.75, 4.6, 's'], [0.75, 0.88, 2.6, 's']]] ] },
  { n: 15, name: 'FB - Guzheng', clips: [
    [31, 53.05, [[0.02, 0.14, 4, 'n'], [0.14, 0.2, 1, 'f'], [0.2, 0.49, 4.4, 'n'], [0.49, 0.59, 6.4, 'n'], [0.59, 0.78, 4.6, 'n'], [0.78, 0.9, 1, 'f']]],
    [81, END, [[0.2, 0.78, 1, 'f']]] ] },
  { n: 16, name: 'FB - Suona', clips: [
    [51, 68.9, [[0.08, 0.37, 2.8, 's'], [0.37, 0.45, 2, 'p'], [0.45, 0.83, 2.8, 's'], [0.83, 0.9, 2.8, 'o'], [0.9, 1, 2.8, 's']]] ] },
  { name: 'Perc', folder: [
    [15, 31, [[15, 31, 13, 6]]], [31, 38.9, [[31, 38.9, 8, 6]]], [38.9, 52.6, [[38.9, 47, 18, 6], [47, 52.6, 4, 22]]],
    [52.6, 81, [[52.6, 81, 23, 5], [59.9, 68, 4, 6], [59.9, 68.9, 13, 6], [71.9, 75, 4, 5], [71.9, 79, 9, 10]]], [81, END, [[81, END, 4, 5]]]] },
  { n: 17, name: 'FB - Tubular', clips: [
    [47, 55.9, hits([[0.1, 0.62], [0.65, 1]])], [59.9, 68, hits([[0.13, 0.45], [0.62, 1]])],
    [71.9, 75, hits([[0.35, 1]])], [81, END, [[0.2, 0.68, 1, 'f']]] ] },
  { n: 18, name: 'FB - BassDrum', clips: [
    [31, 38.9, hits([[0.12, 0.25], [0.65, 0.78]])], [47, 55.9, hits([[0.1, 0.22], [0.34, 0.46], [0.64, 0.78]])],
    [71.9, 79, hits([[0.15, 0.3], [0.75, 0.9]], 4)] ] },
  { n: 19, name: 'FB - CrushCymb', meter: 18, clips: [
    [15, 31, hits([[0.06, 0.18], [0.31, 0.43], [0.57, 0.68], [0.83, 0.95]])], [47, 55.9, hits([[0.1, 0.32], [0.34, 0.55], [0.67, 0.92]])],
    [59.9, 68.9, hits([[0.12, 0.33], [0.57, 0.78]])], [71.9, 79, hits([[0.16, 0.44], [0.75, 1]])] ] },
  { n: 20, name: 'FB - SnareDrum', clips: [
    [38.9, 53.05, [[0.03, 0.62, 3, 'n'], [0.62, 0.98, 5.4, 'n']]] ] },
  { n: 21, name: 'FB - TamTam', clips: [
    [52.6, 83, [[0.01, 0.02, 3, 's'], [0.02, 0.05, 5.4, 's'], [0.05, 0.08, 3.2, 's'], [0.08, 0.2, 1, 'f'], [0.275, 0.31, 4.4, 's'], [0.31, 0.34, 2.6, 's'], [0.34, 0.42, 1, 'f'], [0.42, 0.46, 2.8, 'o'], [0.46, 0.58, 1, 'f'], [0.58, 0.615, 3.2, 's'], [0.615, 0.69, 1, 'f'], [0.69, 0.71, 2.8, 'o'], [0.71, 0.81, 1, 'f'], [0.81, 0.845, 3.2, 's'], [0.845, 0.95, 1, 'f']]] ] },
  { name: 'Drums', folder: [
    [1.75, 31, [[1.75, 31, 4, 5], [15, 31, 10, 6], [1.75, 31, 22, 6]]],
    [31, 84.15, [[31, 52, 16, 5], [38.9, 84.15, 22, 6], [52, 70, 4, 11], [52, 53.2, 15, 7], [68.5, 70, 15, 7], [72.2, 82, 5, 5], [80, 82, 16, 6]]]] },
  { n: 22, name: 'FB - Drum1', meter: 19, clips: [
    [1.75, 33, [[0.17, 0.98, 2.8, 'o']]], [52.05, 69.9, drum], [72.2, 82, [[0.08, 0.9, 2.8, 'o']]] ] },
  { n: 23, name: 'FB - Drum2', meter: 20, clips: [
    [15, 33, [[0.05, 0.96, 4, 'n']]], [52.05, 69.9, [[0.05, 0.96, 4, 'n']]] ] },
];

const ticks = [1, 9, 17, 25, 33, 41, 49, 57, 65, 73, 81, 89, 97];

/* ---------- sections ---------- */

function Picked({ label, value }) {
  return (
    <Picker>
      <PickerSelect aria-label={label} defaultValue={value}><option>{value}</option></PickerSelect>
      <Down />
    </Picker>
  );
}

const tools = [
  ['选择', Arrow, true], ['范围', Range], ['画笔', Pencil], ['擦除', Eraser], ['剪切', Scissors], ['胶水', Glue],
  ['静音', Cross], ['缩放', Lens], ['手', Hand], ['线', LineIcon, true], ['扭曲', LineIcon, true], ['播放', Speaker, true], ['颜色', Bucket],
];

function Toolbar() {
  return (
    <TopBar>
      <Group $w={78}><Cell aria-label="撤销"><Undo /></Cell><Cell aria-label="重做"><Redo /></Cell></Group>
      <Group $w={233}>{['M', 'S', 'L', 'R', 'W', 'A'].map((c) => <Cell key={c} $dim={c === 'L'}>{c}</Cell>)}</Group>
      <Group $w={233}>
        <Cell $w={39} $on aria-label="自动化"><Automation /></Cell>
        <Picked label="自动化模式" value="触控" />
        <Cell $w={39} $rule aria-label="编辑"><Thin $s={28} $b={600}>e</Thin></Cell>
      </Group>
      <Group $w={78}><Cell $w={39} $on aria-label="自动滚动"><Scroll /></Cell><Cell aria-label="滚动选项"><Down /></Cell></Group>
      <Group $w={505}>
        {tools.map(([label, Glyph, notch], i) => <Cell key={label} $on={i === 0} $notch={notch} aria-label={label}><Glyph /></Cell>)}
      </Group>
      <Group $w={68}><Cell aria-label="颜色菜单"><Ball /><Down /></Cell></Group>
      <Group $w={39}><Cell aria-label="零交叉"><XFade /></Cell></Group>
      <Group $w={233}><Cell $w={39} $on aria-label="吸附"><Snap /></Cell><Picked label="吸附类型" value="网格" /></Group>
      <Group $w={233}><HashSlot><Hash /></HashSlot><Picked label="网格类型" value="节拍" /></Group>
      <TopEnd>
        <Group $grow><Cell $w={39} aria-label="量化"><Thin $b={600}>Q</Thin></Cell><QText>1/8&nbsp; 三连音</QText></Group>
        <Group $w={155}>
          <Cell $w={39} $on aria-label="左区域"><Zone side="left" /></Cell>
          <Cell aria-label="下区域"><Zone side="low" /></Cell>
          <Cell aria-label="右区域"><Zone side="right" /></Cell>
          <Cell aria-label="区域设置"><ZoneSetup /></Cell>
        </Group>
        <Group $w={39}><Cell aria-label="设置"><MdSettings size={26} /></Cell></Group>
      </TopEnd>
      <Watermark><span>www.</span><Big>BANDICAM</Big><span>.com</span></Watermark>
    </TopBar>
  );
}

function LeftZone() {
  return (
    <Inspector>
      <Tabs><Tab $w={111} $on>观测区</Tab><Tab $w={122}>可见通道</Tab><TabMenu aria-label="菜单"><Equals /></TabMenu></Tabs>
      <InspectorBody>
        <TrackPick>Brass<svg width="7" height="12" viewBox="0 0 7 12"><path d="M0 0l7 6-7 6z" fill="#0b0d10" /></svg></TrackPick>
        <Strip>
          <StripPair $w={70}><StripKey>m</StripKey><StripKey $rule>s</StripKey></StripPair>
          <Round $d={26} $ml={12} aria-label="录音"><svg width="12" height="12"><circle cx="6" cy="6" r="6" fill="#0b0d10" /></svg></Round>
          <Round $d={20} $ml={5} aria-label="监听"><svg width="9" height="10" viewBox="0 0 9 10"><path d="M0 3h3l4-3v10L3 7H0z" fill="#0b0d10" /></svg></Round>
          <StripPair $w={77} $ml={13}><StripKey aria-label="通道"><Equals color="#0b0d10" w={15} /></StripKey><StripKey aria-label="锁定"><Unlock /></StripKey></StripPair>
        </Strip>
        <Tree>
          <TreeHead><TreeFolder />Brass</TreeHead>
          <TreeList>
            {['Horns', 'Trumpets', 'Trombones', 'LowBrass'].map((t, i) => (
              <TreeItem key={t} $last={i === 3}><AudioGlyph />FB - {t}</TreeItem>
            ))}
          </TreeList>
        </Tree>
      </InspectorBody>
      <Tabs $low><Tab $w={102} $on $low>轨道</Tab><Tab $w={112} $low>编辑器</Tab></Tabs>
    </Inspector>
  );
}

function TrackName({ t }) {
  if (t.pick) {
    return (
      <NamePick>
        <NameSelect aria-label="轨道名称" defaultValue={t.name}><option>{t.name}</option></NameSelect>
        <Down w={11} h={11} color="#050505" />
      </NamePick>
    );
  }
  if (t.input) return <NameInput aria-label="轨道名称" defaultValue={t.name} />;
  return <Name $folder={!!t.folder}>{t.name}</Name>;
}

function Track({ t }) {
  return (
    <TrackRow>
      <TrackLine>
        {!t.folder && <Indent />}
        <Tag $folder={!!t.folder}>{t.folder ? <FolderOpen /> : <><Wave />{t.n}</>}</Tag>
        <KeyPair><Key>m</Key><Key>s</Key></KeyPair>
        <TrackName t={t} />
        <MeterSlot>{t.meter && <><MeterBar $h={t.meter} /><MeterBar $h={t.meter} /></>}</MeterSlot>
      </TrackLine>
    </TrackRow>
  );
}

function Project() {
  return (
    <Frame>
      <ListHead>
        <HeadGroup $w={78}><Cell aria-label="添加轨道"><Plus /></Cell><Cell aria-label="轨道预设"><Down w={15} h={9} /></Cell></HeadGroup>
        <Count>42 / 42</Count>
        <HeadGroup $w={78}><Cell aria-label="列表"><ListIcon /></Cell><Cell aria-label="查找"><Lens /></Cell></HeadGroup>
      </ListHead>
      <Ruler>
        <Cycle>
          <svg width="14" height="14"><path d="M0 0h14L0 14z" fill="#fff" /></svg>
          <svg width="14" height="14"><path d="M0 0h14v14z" fill="#fff" /></svg>
        </Cycle>
        {ticks.map((b) => <Tick key={b} $bar={b} $out={b > 87}>{b}</Tick>)}
        <Playhead />
      </Ruler>
      <Side><SideButton aria-label="标尺"><Down w={10} h={9} color="#222426" /></SideButton></Side>

      <TrackList>
        <StubRow><Indent /><Tag /></StubRow>
        {tracks.map((t) => <Track key={t.name} t={t} />)}
      </TrackList>
      <Lanes>
        <CycleBand />
        {ticks.map((b) => <GridLine key={b} $bar={b} />)}
        <LaneGrid>
          <li />
          {tracks.map((t, i) => (
            <Lane key={t.name}>
              {t.clips && t.clips.map(([a, b, segs], k) => <WaveClip key={k} a={a} b={b} segs={segs} seed={i * 11 + k * 5 + 1} />)}
              {t.folder && t.folder.map(([a, b, parts], k) => <FolderClip key={k} a={a} b={b} parts={parts} />)}
            </Lane>
          ))}
        </LaneGrid>
        {ticks.map((b) => <GridLine key={b} $bar={b} $over />)}
        <Playhead />
      </Lanes>
      <Side>
        <PencilMark width="12" height="14" viewBox="0 0 12 14"><path d="M1 13 11 1" stroke="#85888a" strokeWidth="2" /></PencilMark>
        <VRange $h={76} $up type="range" aria-label="波形缩放" defaultValue="0" />
        <VScroll role="scrollbar" aria-label="垂直滚动" aria-controls="tracks" aria-valuenow={30}><VThumb /></VScroll>
        <Down w={11} h={8} color="#a9abad" />
        <Icon w={10} h={24}><path d="M1 14h8" strokeWidth="1.500" /></Icon>
        <VRange $h={84} type="range" aria-label="垂直缩放" defaultValue="7" />
        <Icon w={10} h={18}><path d="M1 12h8M5 8v8" strokeWidth="1.500" /></Icon>
      </Side>

      <ListFoot><Dash>-</Dash><Down w={14} h={9} color="#7d8285" /><MdSettings size={20} /></ListFoot>
      <TimeFoot>
        <HScroll role="scrollbar" aria-label="水平滚动" aria-controls="tracks" aria-valuenow={0}><HThumb /></HScroll>
        <Down w={11} h={8} color="#b9babc" />
        <Icon w={8} h={10}><path d="M0 5h8" strokeWidth="2" /></Icon>
        <HRange type="range" aria-label="水平缩放" defaultValue="18" />
        <Icon w={10} h={10}><path d="M0 5h10M5 0v10" strokeWidth="2" /></Icon>
      </TimeFoot>
    </Frame>
  );
}

function Position({ label, glyph, values }) {
  return (
    <Group $w={232} $dark>
      <Cell $w={38} $solid $notch aria-label={label}>{glyph}</Cell>
      <Digits>{values.map((v, i) => <span key={i}>{v}</span>)}</Digits>
    </Group>
  );
}

function TransportBar() {
  return (
    <BottomBar>
      <Group $w={39}><Cell aria-label="音频性能"><Sync /></Cell></Group>
      <Group $w={68}><Cell aria-label="录音模式"><svg width="18" height="18"><circle cx="9" cy="9" r="9" fill={ink} /></svg><Down /></Cell></Group>
      <Dots />
      <Group $w={68}><Cell aria-label="音频录音"><Wave color={ink} /><Down /></Cell></Group>
      <Dots />
      <Group $w={68}><Cell aria-label="MIDI 录音"><Midi /><Down /></Cell></Group>
      <Dots />
      <Group $w={59}><Cell aria-label="自动量化"><Thin $s={22}>AQ</Thin></Cell></Group>
      <Position label="左定位点" glyph={<LeftFlag />} values={['1.', '4.', '1.', '0']} />
      <Position label="右定位点" glyph={<RightFlag />} values={['87.', '1.', '1.', '0']} />
      <Group $w={116}>
        <Cell $w={40} $on aria-label="锁定插入"><Lock /></Cell>
        <Cell $notch aria-label="插入"><PunchIn /></Cell>
        <Cell $notch aria-label="穿出"><PunchOut /></Cell>
      </Group>
      <Dots />
      <Transport>
        <TransportKey aria-label="循环"><Cycling /></TransportKey>
        <TransportKey aria-label="停止"><Icon w={20} h={20}><rect x="2" y="2" width="16" height="16" strokeWidth="3" /></Icon></TransportKey>
        <TransportKey $play aria-label="播放"><Icon w={22} h={24}><path d="M3 3v18l16-9z" stroke="#123a12" strokeWidth="3" /></Icon></TransportKey>
        <TransportKey aria-label="录音"><Icon w={22} h={22}><circle cx="11" cy="11" r="9" strokeWidth="3" /></Icon></TransportKey>
      </Transport>
      <Dots />
      <Position label="小节" glyph={<Note />} values={['28.', '2.', '1.', '90']} />
      <EndGroup>
        <TimeClip>
          <Group $grow $dark>
            <Cell $w={38} $solid $notch aria-label="时间"><ClockIcon /></Cell>
            <Clock>0:00:54.5</Clock>
          </Group>
        </TimeClip>
        <Group $w={78}><Cell aria-label="节拍器"><Metronome /></Cell><Cell aria-label="节拍器设置"><Thin $s={28} $b={600}>e</Thin></Cell></Group>
        <Dots />
        <Output>
          <OutBar $w={1} $h={38} $ml={0} $c="#5a5d60" />
          <OutBar $w={10} $h={2} $ml={14} $c="#2ba0b8" />
          <OutBar $w={10} $h={2} $ml={2} $c="#2ba0b8" />
          <OutBar $w={11} $h={35} $ml={6} $c={cyanBar} />
          <OutBar $w={11} $h={35} $ml={1} $c={cyanBar} />
          <OutBar $w={7} $h={38} $ml={4} $c="#d91616" />
        </Output>
        <Dots />
        <Group $w={39}><Cell aria-label="走带设置"><MdSettings size={26} /></Cell></Group>
      </EndGroup>
    </BottomBar>
  );
}

export default function App() {
  return (
    <Page>
      <Global />
      <Toolbar />
      <InfoLine>无选择对象</InfoLine>
      <Main id="tracks">
        <LeftZone />
        <Project />
      </Main>
      <TransportBar />
    </Page>
  );
}
